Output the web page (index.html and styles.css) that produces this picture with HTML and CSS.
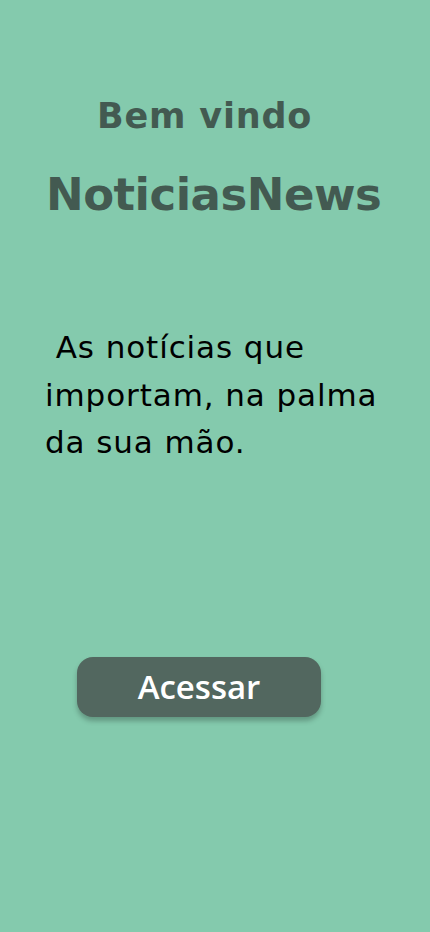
FILE: index.html
```html
<!DOCTYPE html>
<html lang="pt">
<head>
<meta charset="utf-8">
<title>NoticiasNews</title>
<link rel="stylesheet" href="styles.css">
</head>
<body>
<main class="screen">
  <header class="welcome">
    <h2 class="welcome-sub">Bem vindo</h2>
    <h1 class="brand">NoticiasNews</h1>
  </header>
  <p class="tagline">&nbsp;As notícias que importam, na palma da sua mão.</p>
  <div class="actions">
    <button class="btn-access" type="button">Acessar</button>
  </div>
</main>
</body>
</html>
```
FILE: styles.css
```css
* { box-sizing: border-box; }
html, body {
  margin: 0;
  padding: 0;
  background: #84caad;
}
.screen {
  width: 430px;
  min-height: 932px;
  background: #84caad;
  display: flex;
  flex-direction: column;
  font-family: "DejaVu Sans", "Noto Sans", sans-serif;
}
.welcome {
  padding-top: 92px;
  display: flex;
  flex-direction: column;
}
.welcome-sub {
  margin: 0 0 0 97px;
  font-size: 35px;
  font-weight: 700;
  color: #435a51;
  line-height: 48px;
  letter-spacing: 0.8px;
}
.brand {
  margin: 25px 0 0 46px;
  font-size: 45px;
  font-weight: 700;
  color: #435a51;
  line-height: 60px;
  letter-spacing: -0.5px;
}
.tagline {
  margin: 99px 0 0 45px;
  width: 340px;
  font-size: 31px;
  line-height: 47.5px;
  color: #000;
  font-weight: 400;
  letter-spacing: 0.9px;
}
.actions {
  margin-top: 190px;
  padding-left: 77px;
}
.btn-access {
  width: 244px;
  height: 60px;
  border: none;
  border-radius: 16px;
  background: #52675f;
  color: #fff;
  font-family: "Open Sans", "DejaVu Sans", sans-serif;
  font-size: 33px;
  font-weight: 600;
  line-height: 60px;
  padding: 0;
  box-shadow: 0 4px 5px rgba(0,0,0,0.25);
  cursor: pointer;
}
```
